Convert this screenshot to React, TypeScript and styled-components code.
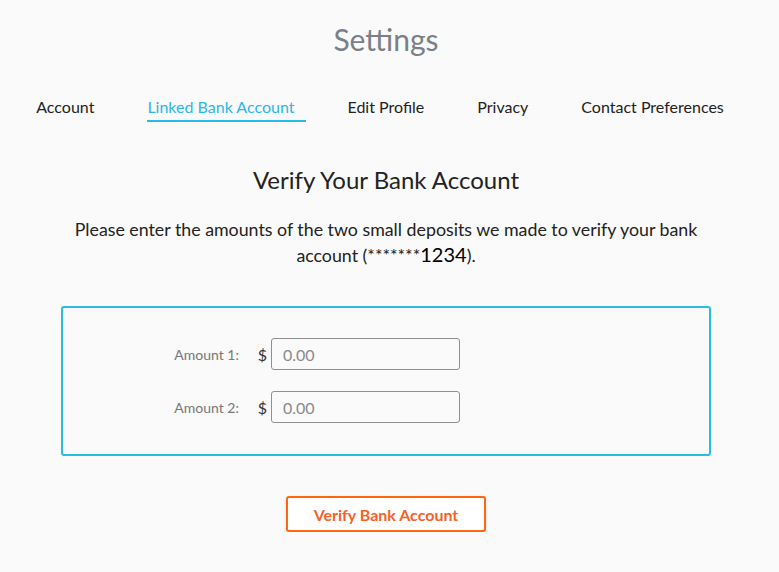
import React from "react";
import styled, { createGlobalStyle } from "styled-components";

const GlobalStyle = createGlobalStyle`
  html, body {
    margin: 0;
    padding: 0;
    background: #fafafa;
  }
  body {
    font-family: Lato, "Open Sans", Arial, sans-serif;
    color: #222;
  }
  * { box-sizing: border-box; }
`;

const Page = styled.main`
  width: 772px;
  display: flex;
  flex-direction: column;
  align-items: center;
  padding-top: 19px;
`;

const Title = styled.h1`
  margin: 0;
  font-size: 30px;
  font-weight: 400;
  line-height: 40px;
  color: #7b7f89;
`;

const Tabs = styled.nav`
  display: flex;
  justify-content: center;
  gap: 53px;
  margin-top: 38px;
  padding-right: 12px;
`;

const Tab = styled.a<{ $active?: boolean }>`
  position: relative;
  font-size: 16px;
  line-height: 20px;
  color: ${(p) => (p.$active ? "#29b8e4" : "#222")};
  text-decoration: none;
  padding-bottom: 4px;
  cursor: pointer;

  &::after {
    content: "";
    display: ${(p) => (p.$active ? "block" : "none")};
    position: absolute;
    left: 0;
    right: -11px;
    bottom: -1px;
    height: 2px;
    background: #25bde8;
  }
`;

const Heading = styled.h2`
  margin: 44px 0 0;
  font-size: 24px;
  font-weight: 400;
  line-height: 30px;
  color: #222;
`;

const Intro = styled.p`
  margin: 21px 0 0;
  max-width: 640px;
  text-align: center;
  font-size: 17.8px;
  line-height: 26px;
  color: #222;
`;

const Digits = styled.span`
  font-size: 20px;
  line-height: 20px;
  color: #000;
`;

const Box = styled.section`
  margin-top: 38px;
  width: 650px;
  border: 2px solid #29bde6;
  border-radius: 3px;
  padding: 30px 0 31px;
  display: flex;
  flex-direction: column;
  gap: 21px;
`;

const Row = styled.div`
  display: grid;
  grid-template-columns: 176px 32px 189px;
  align-items: center;
`;

const Label = styled.label`
  text-align: right;
  font-size: 14px;
  color: #777;
`;

const Dollar = styled.span`
  text-align: right;
  font-size: 16px;
  color: #333;
  padding-right: 4px;
`;

const Input = styled.input`
  width: 189px;
  height: 32px;
  border: 1px solid #8f8f8f;
  border-radius: 3px;
  background: #fafafa;
  padding: 0 11px;
  font-family: Lato, "Open Sans", Arial, sans-serif;
  font-size: 16px;
  color: #222;
  outline: none;

  &::placeholder {
    color: #8a8a8a;
  }
`;

const Button = styled.button`
  margin-top: 40px;
  width: 200px;
  height: 36px;
  border: 2px solid #ff6612;
  border-radius: 3px;
  background: #fff;
  box-shadow: 0 1px 3px rgba(0, 0, 0, 0.12);
  font-family: Lato, "Open Sans", Arial, sans-serif;
  font-size: 16px;
  font-weight: 700;
  color: #f76128;
  cursor: pointer;
`;

const tabs = ["Account", "Linked Bank Account", "Edit Profile", "Privacy", "Contact Preferences"];

export default function App() {
  return (
    <>
      <GlobalStyle />
      <Page>
        <Title>Settings</Title>
        <Tabs>
          {tabs.map((t) => (
            <Tab key={t} $active={t === "Linked Bank Account"}>
              {t}
            </Tab>
          ))}
        </Tabs>
        <Heading>Verify Your Bank Account</Heading>
        <Intro>
          Please enter the amounts of the two small deposits we made to verify your bank account
          (*******<Digits>1234</Digits>).
        </Intro>
        <Box>
          <Row>
            <Label htmlFor="a1">Amount 1:</Label>
            <Dollar>$</Dollar>
            <Input id="a1" placeholder="0.00" />
          </Row>
          <Row>
            <Label htmlFor="a2">Amount 2:</Label>
            <Dollar>$</Dollar>
            <Input id="a2" placeholder="0.00" />
          </Row>
        </Box>
        <Button>Verify Bank Account</Button>
      </Page>
    </>
  );
}
